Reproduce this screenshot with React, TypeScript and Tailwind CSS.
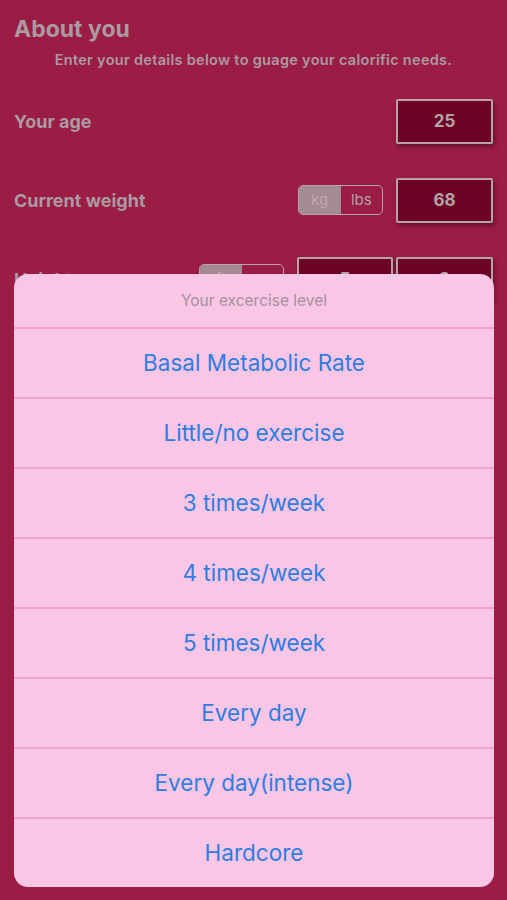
import React from "react";

const levels = [
  "Basal Metabolic Rate",
  "Little/no exercise",
  "3 times/week",
  "4 times/week",
  "5 times/week",
  "Every day",
  "Every day(intense)",
  "Hardcore",
];

function ValueBox({ value, w = "w-[97px]" }: { value: string; w?: string }) {
  return (
    <div
      className={`${w} h-[45px] flex items-center justify-center bg-[#6d0124] border-2 border-[#b7a3aa] rounded-[2px] shadow-[2px_3px_4px_rgba(0,0,0,0.35)] text-[17px] font-bold text-[#b3a4aa]`}
    >
      {value}
    </div>
  );
}

function UnitToggle({ left, right }: { left: string; right: string }) {
  return (
    <div className="flex w-[85px] h-[30px] rounded-[5px] border border-[#b7a3aa] overflow-hidden text-[15px] text-[#b3a4aa]">
      <div className="flex-1 flex items-center justify-center bg-[#a38a94] text-[#c2a6b1]">{left}</div>
      <div className="flex-1 flex items-center justify-center">{right}</div>
    </div>
  );
}

export default function App() {
  return (
    <div className="relative w-[507px] h-[900px] bg-[#9b1c45] overflow-hidden font-['Inter',sans-serif]">
      {/* background form, dimmed */}
      <div className="px-[14px] pt-[14px]">
        <h1 className="text-[23px] leading-[30px] font-bold text-[#aa9aa2]">About you</h1>
        <p className="mt-[5px] text-center text-[14.5px] font-semibold text-[#aa9aa2] tracking-[0.3px]">
          Enter your details below to guage your calorific needs.
        </p>

        <div className="mt-[28px] flex items-center justify-between">
          <span className="text-[18px] font-bold text-[#aa9aa2]">Your age</span>
          <ValueBox value="25" />
        </div>

        <div className="mt-[34px] flex items-center">
          <span className="flex-1 text-[18px] font-bold text-[#aa9aa2]">Current weight</span>
          <UnitToggle left="kg" right="lbs" />
          <div className="w-[13px]" />
          <ValueBox value="68" />
        </div>

        <div className="mt-[34px] flex items-center">
          <span className="flex-1 text-[18px] font-bold text-[#aa9aa2]">Height</span>
          <UnitToggle left="ft" right="cm" />
          <div className="w-[13px]" />
          <ValueBox value="5" w="w-[96px]" />
          <div className="w-[3px]" />
          <ValueBox value="8" />
        </div>
      </div>

      {/* action sheet */}
      <div className="absolute left-[14px] right-[13px] top-[274px] bottom-[13px] rounded-[14px] bg-[#f9c6e6] overflow-hidden flex flex-col">
        <div className="h-[53px] flex items-center justify-center text-[15.5px] text-[#a6909c]">
          Your excercise level
        </div>
        {levels.map((l) => (
          <div
            key={l}
            className="h-[70px] flex items-center justify-center border-t-2 border-[#efa3d0] text-[22.5px] text-[#2e7de0]"
          >
            {l}
          </div>
        ))}
      </div>
    </div>
  );
}
